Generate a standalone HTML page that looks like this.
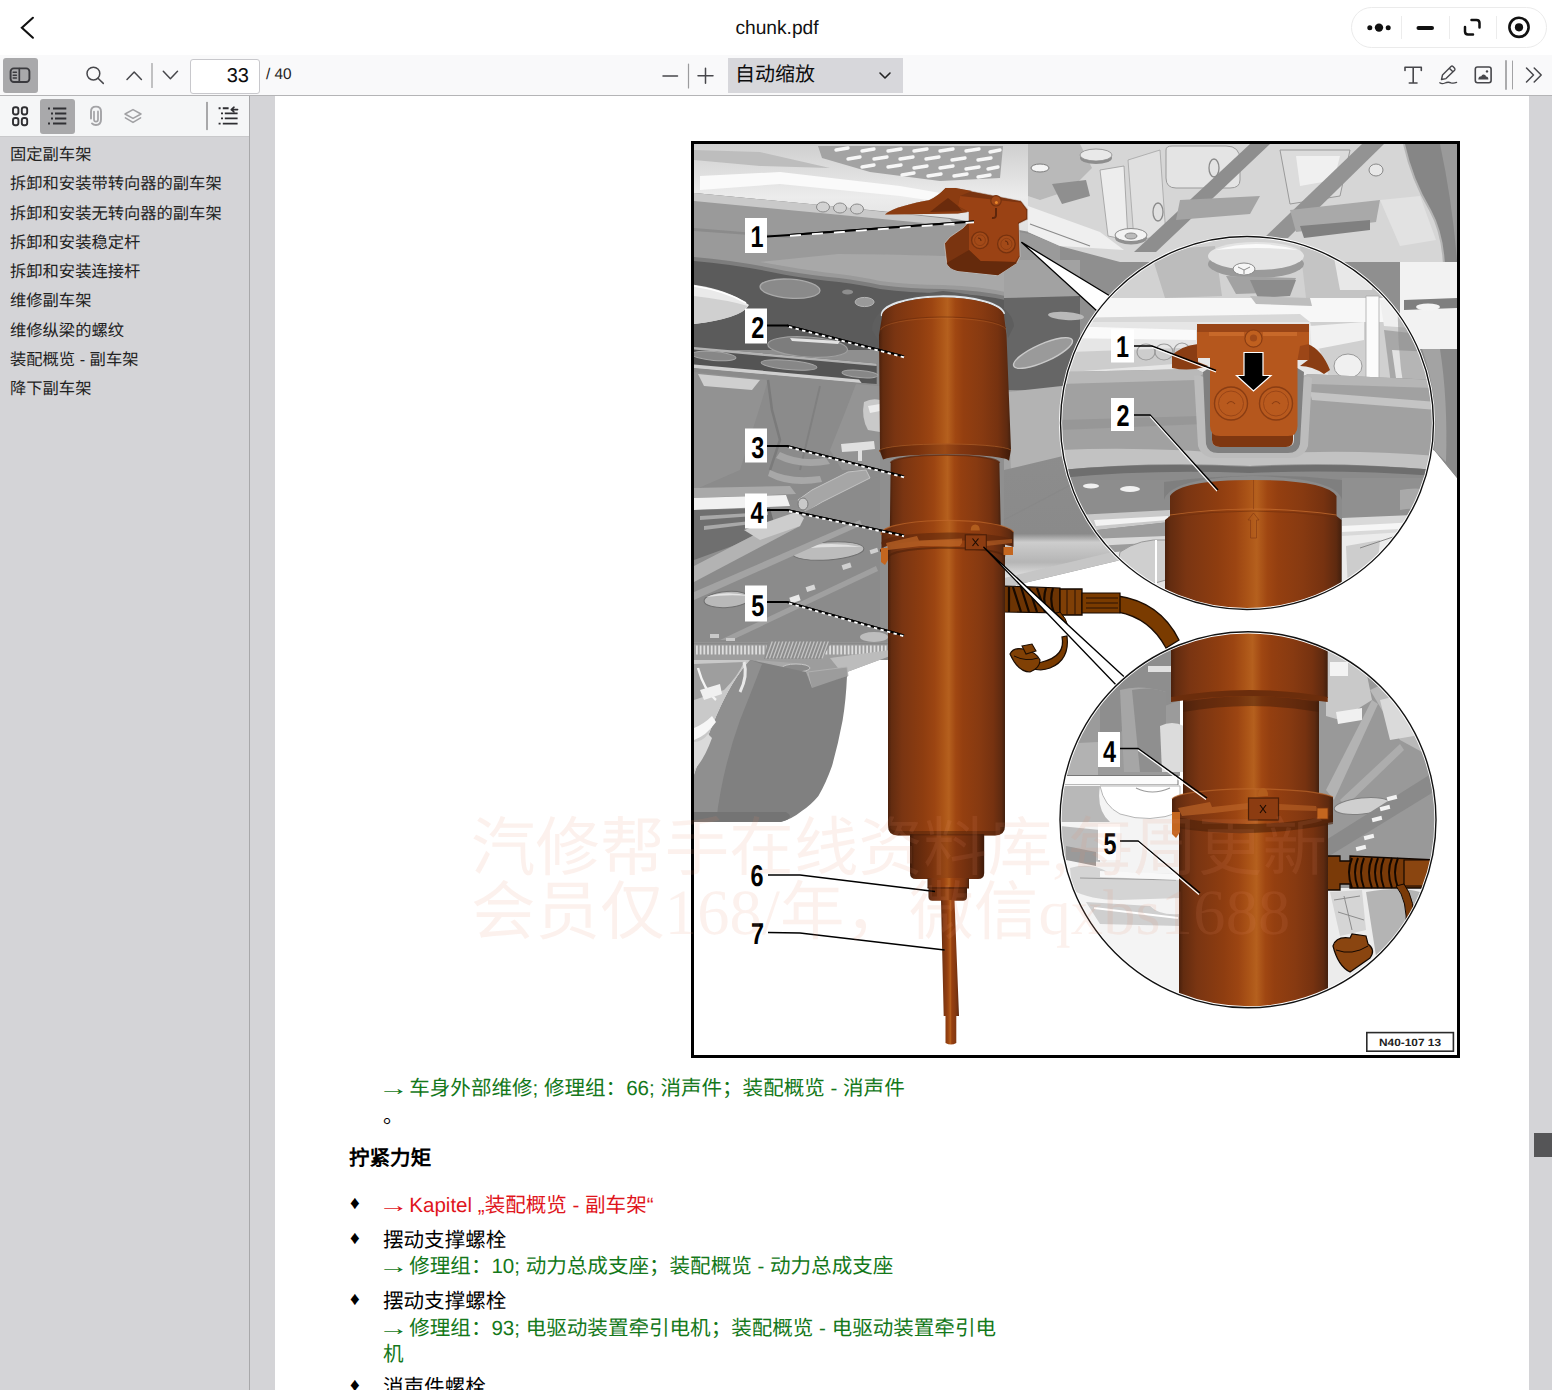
<!DOCTYPE html>
<html lang="zh-CN">
<head>
<meta charset="utf-8">
<title>chunk.pdf</title>
<style>
*{box-sizing:border-box;margin:0;padding:0}
html,body{width:1552px;height:1390px;overflow:hidden;background:#fff}
body{text-rendering:geometricPrecision;position:relative;font-family:"Liberation Sans",sans-serif;color:#0c0c0d}
.abs{position:absolute}
#titlebar{left:0;top:0;width:1552px;height:55px;background:#fff}
#title{left:0;top:0;width:1554px;height:58px;line-height:58px;text-align:center;font-size:19.2px;color:#111}
#capsule{left:1351px;top:7px;width:196px;height:41px;border:1px solid #ebebeb;border-radius:21px;background:#fff}
#toolbar{left:0;top:55px;width:1552px;height:41px;background:#f9f9fa;border-bottom:1px solid #b4b4b6}
#sbtoggle{left:3px;top:58px;width:35px;height:35px;background:#a9a9ab;border-radius:3px}
#pagenum{left:190px;top:59px;width:70px;height:35px;background:#fff;border:1px solid #c8c8cc;border-radius:3px;font-size:20px;line-height:33px;text-align:right;padding-right:10px;color:#0c0c0d}
#numpages{left:266px;top:58px;height:33px;line-height:33px;font-size:15.4px;color:#222}
#scale{left:728px;top:58px;width:175px;height:35px;background:#d7d7db;font-size:20px;line-height:35px;padding-left:7px;color:#0c0c0d}
#sidebar{left:0;top:96px;width:249px;height:1294px;background:#d4d4d7}
#sbborder{left:249px;top:96px;width:1px;height:1294px;background:#a8a8aa}
#sbtools{left:0;top:96px;width:249px;height:41px;background:#f5f6f7;border-bottom:1px solid #c9c9cb}
#outlinebtn{left:40px;top:99px;width:35px;height:35px;background:#a9a9ab;border-radius:3px}
.ol{left:10px;font-size:16.3px;line-height:20px;height:20px;color:#222;white-space:nowrap}
#viewer{left:250px;top:96px;width:1302px;height:1294px;background:#d4d4d7}
#page{left:275px;top:96px;width:1254px;height:1294px;background:#fff;overflow:hidden}
#thumb{left:1534px;top:1133px;width:18px;height:24px;background:#555557}
.t{white-space:nowrap;font-size:20.55px;line-height:26px;height:26px}
.ar{display:inline-block;transform:scaleX(1.5);transform-origin:48% 50%}
.g{color:#14781a}
.r{color:#df151c}
.k{color:#000}
.b{font-size:19px;color:#000;line-height:26px;height:26px}
</style>
</head>
<body>
<!-- title bar -->
<div id="titlebar" class="abs"></div>
<div id="title" class="abs">chunk.pdf</div>
<svg class="abs" style="left:14px;top:12px" width="30" height="32" viewBox="0 0 30 32"><path d="M18.9 5.8L7.9 15.7L18.9 25.7" fill="none" stroke="#111" stroke-width="2.1" stroke-linecap="round" stroke-linejoin="miter"/></svg>
<div id="capsule" class="abs"></div>
<svg class="abs" style="left:1351px;top:7px" width="196" height="41" viewBox="1351 7 196 41">
  <g stroke="#ececec" stroke-width="1"><path d="M1401.5 16V39M1449.5 16V39M1496.5 16V39"/></g>
  <circle cx="1379" cy="27.6" r="4.2" fill="#111"/><circle cx="1369.8" cy="27.8" r="2.5" fill="#111"/><circle cx="1388.2" cy="27.8" r="2.5" fill="#111"/>
  <path d="M1418.5 28H1432" stroke="#111" stroke-width="4" stroke-linecap="round"/>
  <path d="M1471.5 20H1476.5Q1479.5 20 1479.5 23V27.5M1473 34.5H1468Q1465 34.5 1465 31.5V27" fill="none" stroke="#111" stroke-width="2.5" stroke-linecap="round"/>
  <circle cx="1519" cy="27.3" r="9.6" fill="none" stroke="#111" stroke-width="2.6"/><circle cx="1519" cy="27.3" r="4.1" fill="#111"/>
</svg>

<!-- main toolbar -->
<div id="toolbar" class="abs"></div>
<div id="sbtoggle" class="abs"></div>
<div id="pagenum" class="abs">33</div>
<div id="numpages" class="abs">/ 40</div>
<div id="scale" class="abs">自动缩放</div>
<svg id="tbicons" class="abs" style="left:0;top:55px" width="1552" height="41" viewBox="0 55 1552 41" fill="none" stroke="#47474b" stroke-width="1.5" stroke-linecap="round" stroke-linejoin="round">
  <!-- sidebar toggle -->
  <rect x="10.6" y="68.4" width="18.8" height="13.6" rx="3.2" stroke="#3a3a3e" stroke-width="1.9"/>
  <path d="M19.3 68.5V82" stroke="#3a3a3e" stroke-width="1.7"/><path d="M13.2 72.3H16.4M13.2 75.2H16.4M13.2 78.1H16.4" stroke="#3a3a3e" stroke-width="1.5"/>
  <!-- search -->
  <circle cx="93.4" cy="73.6" r="6.4"/><path d="M98 78.3L103.3 83.4"/>
  <!-- up / down -->
  <path d="M127 79.5L134.2 72L141.4 79.5"/>
  <path d="M152 63.5V87.5" stroke="#9b9b9d" stroke-width="1.2"/>
  <path d="M163.3 71.3L170.4 78.8L177.5 71.3"/>
  <!-- zoom out / in -->
  <path d="M663 76H677.5"/>
  <path d="M688.5 64V88" stroke="#9b9b9d" stroke-width="1.2"/>
  <path d="M698 75.8H713M705.5 68.3V83.3"/>
  <!-- select chevron -->
  <path d="M880 73L885 78L890 73" stroke="#222" stroke-width="1.6"/>
  <!-- T -->
  <path d="M1405 70.5V67.2H1421.3V70.5M1413.2 67.2V83M1409.3 83H1417" stroke-width="1.6"/>
  <!-- pencil -->
  <path d="M1441.5 79.5L1442.5 75L1451 66.5Q1452 65.6 1453 66.5L1454.6 68.2Q1455.4 69.2 1454.6 70.2L1446 78.6Z M1449.3 68.2L1452.9 71.8" stroke-width="1.4"/>
  <path d="M1439.8 82.8Q1442 84.4 1445 83Q1448 81.6 1451 82.8Q1453.6 83.6 1456.6 82.4" stroke-width="1.3"/>
  <!-- image -->
  <rect x="1475.3" y="67" width="15.8" height="15.8" rx="2.2" stroke-width="1.6"/>
  <path d="M1478.3 79.6Q1478.3 76.2 1481.3 76.2Q1482.2 73.6 1484.6 74.8Q1486 75.2 1486 76.6Q1488.4 76.8 1488.4 79.6Z" fill="#47474b" stroke="none"/>
  <circle cx="1487" cy="71.4" r="1.2" fill="#47474b" stroke="none"/>
  <!-- separators -->
  <path d="M1506 61V89" stroke="#a2a2a4" stroke-width="1.8"/><path d="M1512.5 61V89" stroke="#a2a2a4" stroke-width="1"/>
  <!-- >> -->
  <path d="M1526.5 68L1533.5 75L1526.5 82M1534.2 68L1541.2 75L1534.2 82"/>
</svg>

<!-- sidebar -->
<div id="sidebar" class="abs"></div>
<div id="sbtools" class="abs"></div>
<div id="outlinebtn" class="abs"></div>
<div id="sbborder" class="abs"></div>
<svg id="sbicons" class="abs" style="left:0;top:96px" width="249" height="41" viewBox="0 96 249 41" fill="none" stroke="#2e2e32" stroke-width="1.9" stroke-linecap="round" stroke-linejoin="round">
  <!-- thumbnails -->
  <rect x="13" y="107.3" width="5.4" height="7.2" rx="2.2"/><rect x="21.8" y="107.3" width="5.4" height="7.2" rx="2.2"/>
  <rect x="13" y="118" width="5.4" height="7.2" rx="2.2"/><rect x="21.8" y="118" width="5.4" height="7.2" rx="2.2"/>
  <!-- outline (active) -->
  <path d="M53 108.6H66.3M55 113.5H66.3M55 118.4H66.3M53 123.4H66.3" stroke="#303034" stroke-width="2" stroke-linecap="butt"/>
  <path d="M48 108.6h2M51 113.5h2M51 118.4h2M48 123.4h2" stroke="#303034" stroke-width="2" stroke-linecap="butt"/>
  <!-- attachment -->
  <path d="M91 118.6V111.6Q91 106.6 96 106.6Q101 106.6 101 111.6V119.6Q101 125 96 125Q93.4 125 92 123.4" stroke="#a3a3a6" stroke-width="1.9"/>
  <path d="M94 111.6V119.4Q94 121.6 96 121.6Q98 121.6 98 119.4V111.4" stroke="#a3a3a6" stroke-width="1.7"/>
  <!-- layers -->
  <path d="M133 109.6L141 114L133 118.4L125 114Z M125.4 117.8L133 122.4L140.6 117.8" stroke="#a0a0a3" stroke-width="1.5"/>
  <!-- separator -->
  <path d="M207 102.5V129.5" stroke="#8e8e90" stroke-width="1.5"/>
  <!-- current outline item -->
  <path d="M222.8 108.2H228.6M224.8 113.4H237.6M224.8 118.4H237.6M222.8 123.6H237.6" stroke-width="1.9" stroke-linecap="butt"/>
  <path d="M218.6 108.2h2M221 113.4h2M221 118.4h2M218.6 123.6h2" stroke-width="1.9" stroke-linecap="butt"/>
  <path d="M231.3 109.6H237.6M231.3 109.6L234 107.2M231.3 109.6L234 112" stroke-width="1.6"/>
</svg>
<div class="abs ol" style="top:145px">固定副车架</div>
<div class="abs ol" style="top:174px">拆卸和安装带转向器的副车架</div>
<div class="abs ol" style="top:204px">拆卸和安装无转向器的副车架</div>
<div class="abs ol" style="top:233px">拆卸和安装稳定杆</div>
<div class="abs ol" style="top:262px">拆卸和安装连接杆</div>
<div class="abs ol" style="top:291px">维修副车架</div>
<div class="abs ol" style="top:321px">维修纵梁的螺纹</div>
<div class="abs ol" style="top:350px">装配概览 - 副车架</div>
<div class="abs ol" style="top:379px">降下副车架</div>

<!-- viewer -->
<div id="viewer" class="abs"></div>
<div id="page" class="abs"></div>
<div id="thumb" class="abs"></div>

<!-- figure -->
<svg id="fig" class="abs" style="left:691px;top:141px" width="769" height="917" viewBox="691 141 769 917">
<defs>
  <clipPath id="inner"><rect x="694" y="144" width="763" height="911"/></clipPath>
  <clipPath id="c1"><circle cx="1247" cy="423" r="186.5"/></clipPath>
  <clipPath id="c2"><circle cx="1248" cy="819.8" r="188"/></clipPath>
  <linearGradient id="cyl" x1="0" x2="1" y1="0" y2="0">
    <stop offset="0" stop-color="#4a200c"/><stop offset="0.03" stop-color="#632c10"/><stop offset="0.12" stop-color="#7a3512"/>
    <stop offset="0.30" stop-color="#8e3d10"/><stop offset="0.40" stop-color="#9c4512"/><stop offset="0.47" stop-color="#ab5417"/>
    <stop offset="0.52" stop-color="#b5601e"/><stop offset="0.58" stop-color="#a04712"/><stop offset="0.64" stop-color="#943f10"/>
    <stop offset="0.78" stop-color="#873a11"/><stop offset="0.90" stop-color="#763210"/><stop offset="0.97" stop-color="#5e2a10"/><stop offset="1" stop-color="#42200e"/>
  </linearGradient>
  <linearGradient id="cyld" x1="0" x2="1" y1="0" y2="0">
    <stop offset="0" stop-color="#3e1a09"/><stop offset="0.06" stop-color="#5c270d"/><stop offset="0.3" stop-color="#7a330e"/>
    <stop offset="0.5" stop-color="#9a4a16"/><stop offset="0.62" stop-color="#823610"/><stop offset="0.9" stop-color="#632a0e"/><stop offset="1" stop-color="#3e1a09"/>
  </linearGradient>
  <linearGradient id="bump" x1="0" x2="1" y1="0" y2="0">
    <stop offset="0" stop-color="#dcdcdc"/><stop offset="0.25" stop-color="#c4c4c4"/><stop offset="0.7" stop-color="#9a9a9a"/><stop offset="1" stop-color="#858585"/>
  </linearGradient>
  <linearGradient id="fadeR" x1="0" x2="0" y1="0" y2="1">
    <stop offset="0" stop-color="#8d8d8d"/><stop offset="0.66" stop-color="#8a8a8a"/><stop offset="0.72" stop-color="#cdcdcd"/><stop offset="0.86" stop-color="#b5b5b5"/><stop offset="1" stop-color="#f1f1f1"/>
  </linearGradient>
  <linearGradient id="topL" x1="0" x2="0" y1="0" y2="1">
    <stop offset="0" stop-color="#cfcfcf"/><stop offset="0.45" stop-color="#ececec"/><stop offset="1" stop-color="#d6d6d6"/>
  </linearGradient>
</defs>
<rect x="692.5" y="142.5" width="766" height="914" fill="#fff" stroke="#000" stroke-width="3"/>
<g clip-path="url(#inner)">
  <!-- ===== main scene background ===== -->
  <!-- overall mid gray underbody -->
  <path d="M694 144H1457V478L1434 450L1200 540L1125 559L1004 588V640L890 660H694Z" fill="#8f8f8f"/>
  <!-- top light band (engine bay / grille) -->
  <path d="M694 144H1457V260L1300 262L1120 250L1030 232L950 218L820 205L694 193Z" fill="url(#topL)"/>
  <!-- white streaks in top band -->
  <path d="M700 176L780 172L900 186L1010 205L1010 212L900 196L780 184L700 190Z" fill="#fafafa"/>
  <path d="M694 150L760 152L830 168L760 166L694 160Z" fill="#bdbdbd"/>
  <!-- mesh grille -->
  <path d="M818 146H1003L1000 178L940 181L870 172L822 158Z" fill="#a3a3a3"/>
  <g stroke="#f6f6f6" stroke-width="3.4" stroke-linecap="round">
    <path d="M836 150l12-2M862 151l12-2M888 151l13-2M914 151l13-2M940 151l13-2M966 151l13-2M990 152l10-2"/>
    <path d="M848 159l12-2M874 159l13-2M900 159l13-2M926 159l13-2M952 160l13-2M978 160l13-2"/>
    <path d="M862 167l12-2M888 167l13-2M914 168l13-2M940 168l13-2M966 169l13-2M988 169l10-2"/>
    <path d="M902 175l12-2M928 176l13-2M954 176l13-2M978 177l12-2"/>
  </g>
  <!-- beam (subframe cross member) -->
  <path d="M694 193L820 205L950 219L1030 234L1060 246V330L1010 322L1010 300L880 300L800 282L694 262Z" fill="#9a9a9a"/>
  <path d="M760 262Q815 272 838.8 274Q862 277 880 281Q910 285 943 285Q980 286 1010 293L1060 291V268Q1000 258 943 256Q880 254 838 254Z" fill="#a8a8a8"/>
  <path d="M694 193L820 205L950 219L955 226L820 213L694 201Z" fill="#c9c9c9"/>
  <path d="M694 228L790 236L790 238L694 231Z" fill="#8b8b8b"/>
  <!-- three small circles -->
  <g fill="#d2d2d2" stroke="#8a8a8a" stroke-width="1"><ellipse cx="823" cy="207" rx="6.5" ry="5"/><ellipse cx="840" cy="208" rx="6.5" ry="5"/><ellipse cx="857" cy="209" rx="6.5" ry="5"/></g>
  <!-- dark band below beam -->
  <path d="M694 260Q740 264 784.7 273.8Q815 279 838.8 281Q862 284 880 288Q910 292 943 292Q980 293 1010 300L1080 297V392H1004V350L694 350Z" fill="#5b5b5b"/>
  <path d="M694 257Q740 261 784.7 270.8Q815 276 838.8 278Q862 281 880 285Q910 289 943 289Q980 290 1010 297L1080 294V298L1010 301Q980 294 943 293Q910 293 880 289Q862 285 838.8 282Q815 280 784.7 274.8Q740 265 694 261Z" fill="#7d7d7d"/>
  <!-- recess ellipses in dark band -->
  <ellipse cx="790" cy="288.7" rx="30" ry="9.5" fill="#8a8a8a" stroke="#a9a9a9" stroke-width="1.3" transform="rotate(4 790 288.7)"/>
  <ellipse cx="847.6" cy="292" rx="5.5" ry="2.6" fill="#8e8e8e"/>
  <ellipse cx="864.6" cy="302" rx="9.5" ry="4.6" fill="#9a9a9a" stroke="#b5b5b5" stroke-width="1"/>
  <!-- white blob on left -->
  <path d="M694 284.7Q730 290 749 305Q742 318 694 324Z" fill="#eaeaea"/>
  <path d="M694 296Q728 300 748 306Q742 318 694 324Z" fill="#d0d0d0"/>
  <path d="M694 286Q726 291 746 303" fill="none" stroke="#fff" stroke-width="1.6"/>
  <!-- second recess + rail -->
  <ellipse cx="807.7" cy="347" rx="40" ry="10" fill="#7d7d7d" stroke="#9f9f9f" stroke-width="1.2" transform="rotate(4 807.7 347)"/>
  <path d="M790 338L840 341L838 344L792 341Z" fill="#e2e2e2"/>
  <path d="M694 347L876.7 363.5V384L694 372Z" fill="#545454"/>
  <path d="M694 347L876.7 363.5V366L694 349.6Z" fill="#b2b2b2"/>
  <ellipse cx="714" cy="356" rx="22" ry="4.4" fill="#878787" stroke="#a5a5a5" stroke-width="1" transform="rotate(5 714 356)"/>
  <ellipse cx="789" cy="365" rx="28" ry="4.6" fill="#878787" stroke="#a5a5a5" stroke-width="1" transform="rotate(5 789 365)"/>
  <ellipse cx="860" cy="374" rx="18" ry="3.6" fill="#878787" stroke="#a5a5a5" stroke-width="1" transform="rotate(5 860 374)"/>
  <path d="M694 364.5L859 379.5L862 383.5L694 368.5Z" fill="#cfcfcf"/>
  <!-- liner region -->
  <path d="M694 368L862 383L880 386V500L694 500Z" fill="#8b8b8b"/>
  <path d="M694 372L768 380L762 400L740 470L694 490Z" fill="#929292"/>
  <path d="M698 374L760 380L752 390L704 386Z" fill="#cfcfcf"/>
  <path d="M768 380L772 410L780 440L770 470" fill="none" stroke="#7b7b7b" stroke-width="2.5"/>
  <path d="M820 386L812 420L800 470" fill="none" stroke="#808080" stroke-width="2"/>
  <path d="M856 384L846 410L830 450L842 470L880 470V386Z" fill="#949494"/>
  <path d="M864 402Q872 398 880 400V432L868 430Q861 418 864 402Z" fill="#c9c9c9"/>
  <path d="M868 406L880 404V411L870 413Z" fill="#ececec"/>
  <path d="M780 452Q800 462 826 458L830 464Q800 470 776 458Z" fill="#a5a5a5"/>
  <path d="M770 470Q790 480 820 476L822 482Q790 488 768 476Z" fill="#a8a8a8"/>
  <!-- bracket w/ bolt near 3 -->
  <path d="M841 444L874 441L875 449L862 450.5V461H858V451L842 452Z" fill="#e0e0e0"/>
  <!-- pipe streaks on left -->
  <path d="M694 488L790 486L796 494L694 498Z" fill="#a9a9a9"/>
  <path d="M694 498L786 495L790 506L694 510Z" fill="#f1f1f1"/>
  <path d="M694 510L770 508L776 530L694 560Z" fill="#6f6f6f"/>
  <path d="M700 516L768 512V515L700 520ZM704 526L760 520V523L704 530Z" fill="#a9a9a9"/>
  <!-- arm going to cylinder -->
  <path d="M798 500L812 490L848 472L866 470L870 478L822 502L806 512Z" fill="#a6a6a6" stroke="#c3c3c3" stroke-width="1"/>
  <ellipse cx="803" cy="504" rx="5" ry="6" fill="#c9c9c9" stroke="#7a7a7a" stroke-width="1"/>
  <!-- big underbody plate -->
  <path d="M694 566L760 532L800 514L822 503L880 476V642H694Z" fill="#8b8b8b"/>
  <path d="M694 566L760 532L790 520L800 526L766 544L694 582Z" fill="#b3b3b3"/>
  <path d="M744 530L796 512L804 518L800 526L760 540Z" fill="#cdcdcd"/>
  <ellipse cx="828" cy="551" rx="36" ry="9" fill="#bcbcbc" stroke="#6f6f6f" stroke-width="1" transform="rotate(-4 828 551)"/>
  <path d="M796 549Q826 540 862 547Q830 546 796 549Z" fill="#e0e0e0"/>
  <ellipse cx="727" cy="599.5" rx="23" ry="8" fill="#b9b9b9" stroke="#6f6f6f" stroke-width="1" transform="rotate(-4 727 599.5)"/>
  <path d="M706 597Q726 590 750 596Q728 594 706 597Z" fill="#e4e4e4"/>
  <ellipse cx="874" cy="637" rx="14" ry="5" fill="#bdbdbd"/>
  <path d="M694 592L860 520L862 525L694 600Z" fill="#a3a3a3"/>
  <path d="M720 640L876 566L878 571L732 640Z" fill="#a0a0a0"/>
  <rect x="790" y="596" width="10" height="6" fill="#e9e9e9" transform="rotate(-18 795 599)"/>
  <rect x="806" y="586" width="9" height="5" fill="#d8d8d8" transform="rotate(-18 810 588)"/>
  <rect x="842" y="564" width="9" height="5" fill="#d0d0d0" transform="rotate(-18 846 566)"/>
  <rect x="870" y="549" width="8" height="4" fill="#d0d0d0" transform="rotate(-18 874 551)"/>
  <rect x="710" y="634" width="9" height="4" fill="#c9c9c9"/><rect x="726" y="638" width="9" height="3" fill="#c9c9c9"/>
  <!-- serrated strip -->
  <path d="M694 642H890V656L847 672L808 690L800 668L760 664L694 660Z" fill="#9d9d9d"/>
  <path d="M696 650H888" stroke="#dedede" stroke-width="9" stroke-dasharray="1.8 1.9"/>
  <path d="M694 643.5H890" stroke="#8a8a8a" stroke-width="2"/>
  <path d="M768 641L832 641L822 659L764 659Z" fill="#8d8d8d"/>
  <path d="M768 650H826" stroke="#c4c4c4" stroke-width="17" stroke-dasharray="1.4 2.1" transform="skewX(-20) translate(237 0)"/>
  <path d="M830 658L890 650V656L847 672L838 668Z" fill="#bcbcbc"/>
  <!-- under strip shapes -->
  <path d="M756 660L806 664L808 676L770 674Z" fill="#a9a9a9"/>
  <ellipse cx="796" cy="668" rx="14" ry="4" fill="#8a8a8a" stroke="#c4c4c4" stroke-width="1"/>
  <path d="M807.8 672L847 667L848 676L812 690Z" fill="#9c9c9c" stroke="#b5b5b5" stroke-width=".8"/>
  <!-- bumper / wheel arch -->
  <path d="M750 660L806 672L812 688L847 676Q846 700 842.6 720.6Q838 745 832 766Q826 783 818.4 796Q811 805 801.8 811Q792 819 780.6 822H694V775Q706 740 717 714.6Q732 680 750 660Z" fill="#808080"/>
  <path d="M750 660Q732 680 717 714.6Q706 740 694 775V822H716Q722 770 740 720Q752 690 762 664Z" fill="#8f8f8f"/>
  <path d="M694 812H786Q796 818 780.6 822H694Z" fill="#747474"/>
  <!-- wheel-arch interior (light) -->
  <path d="M694 660H750Q732 680 717 714.6Q706 740 694 775Z" fill="#c9c9c9"/>
  <path d="M694 664L744 662Q738 676 724 690L694 700Z" fill="#9e9e9e"/>
  <path d="M698 668Q704 690 716 700" fill="none" stroke="#f4f4f4" stroke-width="2.4"/>
  <path d="M700 690L720 684L722 694L704 700Z" fill="#f0f0f0"/>
  <path d="M694 728Q704 724 712 716L716 722Q706 736 694 740Z" fill="#f7f7f7"/>
  <path d="M694 742Q702 742 708 734L712 738Q704 760 694 770Z" fill="#dadada"/>
  <path d="M744 662Q748 676 740 692" fill="none" stroke="#e8e8e8" stroke-width="3"/>
  <!-- right of cylinder -->
  <path d="M1004 260H1080V560L1040 575L1004 590Z" fill="#a2a2a2"/>
  <path d="M1004 298L1080 296V392L1004 390Z" fill="#666"/>
  <ellipse cx="1043" cy="353" rx="32" ry="9" fill="#9a9a9a" stroke="#c9c9c9" stroke-width="1.4" transform="rotate(-24 1043 353)"/>
  <ellipse cx="1066" cy="316" rx="18" ry="4" fill="#b9b9b9" transform="rotate(4 1066 316)"/>
  
  <path d="M1008 392L1080 384V470L1012 500Z" fill="#b3b3b3"/>
  <path d="M1004 470L1130 440V552L1004 582Z" fill="url(#fadeR)"/>
  <path d="M1004 520L1080 480" stroke="#888" stroke-width="1.2" fill="none"/>
  <path d="M1004 578L1125 549V559L1004 588Z" fill="#c6c6c6"/>
  <circle cx="1087" cy="581" r="1.3" fill="#fff"/><circle cx="1114" cy="571" r="1.3" fill="#fff"/>
  <!-- top right engine area -->
  <path d="M1028 144H1457V262H1120L1060 246L1028 232Z" fill="#d6d6d6"/>
  <path d="M1028 144H1080L1092 168L1070 190L1040 200L1028 196Z" fill="#b9b9b9"/>
  <ellipse cx="1040" cy="168" rx="9" ry="4" fill="#f4f4f4" stroke="#7c7c7c" stroke-width="1"/>
  <ellipse cx="1096" cy="158" rx="16" ry="6" fill="#8e8e8e"/><ellipse cx="1096" cy="155" rx="16" ry="6" fill="#e9e9e9" stroke="#8a8a8a" stroke-width=".8"/>
  <path d="M1052 184L1086 180L1090 196L1062 204Z" fill="#8f8f8f"/>
  <path d="M1100 170L1124 166L1128 240L1108 236Z" fill="#ededed" stroke="#9a9a9a" stroke-width=".8"/>
  <path d="M1028 206L1100 232L1124 250L1060 246L1028 232Z" fill="#efefef"/>
  <path d="M1030 224L1090 246" stroke="#8a8a8a" stroke-width="1.2"/>
  <!-- gearbox blocks -->
  <path d="M1166 150Q1166 146 1172 146H1226Q1240 146 1240 160V180Q1240 188 1230 188H1176Q1166 188 1166 178Z" fill="#e4e4e4" stroke="#9a9a9a" stroke-width="1"/>
  <path d="M1128 160L1160 150L1166 236L1134 240Z" fill="#e0e0e0" stroke="#a5a5a5" stroke-width=".8"/>
  <path d="M1280 150H1350L1340 196L1290 204Z" fill="#dcdcdc" stroke="#9a9a9a" stroke-width="1"/>
  <path d="M1296 156H1340L1334 180L1300 186Z" fill="#f0f0f0"/>
  <!-- dark diagonal bands -->
  <path d="M1250 144H1270L1156 252H1134Z" fill="#8e8e8e"/>
  <path d="M1362 144H1384L1288 238H1264Z" fill="#939393"/>
  <path d="M1180 200L1260 196L1250 214L1176 220Z" fill="#a4a4a4"/>
  <path d="M1290 210L1380 200L1376 222L1296 232Z" fill="#a9a9a9"/>
  <path d="M1300 226L1370 220V230L1304 238Z" fill="#808080"/>
  <ellipse cx="1214" cy="168" rx="5" ry="9" fill="none" stroke="#8a8a8a" stroke-width="1.3"/>
  <ellipse cx="1158" cy="212" rx="5" ry="9" fill="none" stroke="#8a8a8a" stroke-width="1.3"/>
  <ellipse cx="1376" cy="170" rx="7" ry="6" fill="#e8e8e8" stroke="#888" stroke-width="1"/>
  <!-- bolt -->
  <ellipse cx="1131" cy="238" rx="16" ry="6.5" fill="#909090"/>
  <ellipse cx="1131" cy="235" rx="16" ry="6.5" fill="#f3f3f3" stroke="#8a8a8a" stroke-width="1"/>
  <ellipse cx="1131" cy="236" rx="6" ry="3" fill="#bbb" stroke="#777" stroke-width=".8"/>
  <!-- wheel arch right -->
  <path d="M1404 144H1457V340L1440 320Q1452 250 1430 210Q1412 180 1404 144Z" fill="#868686"/>
  <path d="M1418 144H1440Q1452 200 1457 260V144Z" fill="#9a9a9a"/>
  <path d="M1404 144Q1412 180 1430 210Q1452 250 1440 320" fill="none" stroke="#b5b5b5" stroke-width="2"/>
  <path d="M1380 200L1420 196L1436 240L1400 246Z" fill="#e2e2e2"/>
  <!-- right strip next to circle -->
  <path d="M1400 262H1457V349H1400Z" fill="#f2f2f2"/>
  <path d="M1404 300L1457 298V308L1404 310Z" fill="#7f7f7f"/>
  <ellipse cx="1428" cy="307" rx="12" ry="3.4" fill="#f4f4f4"/>
  <path d="M1420 349H1457V478L1434 450Q1440 400 1420 349Z" fill="#8a8a8a"/>
  <path d="M1422 349H1440Q1448 400 1446 462L1434 450Q1440 400 1422 349Z" fill="#a3a3a3"/>
  <!-- ===== hose + hook right of cylinder (behind cylinder) ===== -->
  <g>
    <path d="M1118 596Q1160 602 1179 640L1166 648Q1150 618 1118 612Z" fill="#7a3b00" stroke="#1c0d03" stroke-width="1.3"/>
    <path d="M1004 586L1060 588V613L1004 612Z" fill="#6d3403" stroke="#140800" stroke-width="1.2"/>
    <path d="M1009 587V612M1013 587L1021 612M1021 587L1029 612M1029 588L1037 612M1037 588L1045 612M1046 588Q1042 600 1047 613M1053 588Q1049 600 1054 613" fill="none" stroke="#160900" stroke-width="2.2"/>
    <path d="M1060 589H1082V615H1060Z" fill="#7f3f06" stroke="#140800" stroke-width="1.3"/>
    <path d="M1067 589V615M1075 589V615" stroke="#2a1204" stroke-width="1"/>
    <path d="M1082 593H1120V613H1082Z" fill="#7a3b00" stroke="#140800" stroke-width="1.2"/>
    <path d="M1086 598H1118M1086 603H1118M1086 608H1118" stroke="#2a1204" stroke-width="1"/>
    <path d="M1060 612Q1066 618 1068 626L1064 628Q1060 620 1054 614Z" fill="#7a3b00" stroke="#140800" stroke-width="1"/>
    <!-- hook -->
    <path d="M1062 637Q1066 656 1042 662Q1036 664 1030 662L1028 667Q1040 672 1050 668Q1070 660 1067 636Z" fill="#7a3b00" stroke="#1c0d03" stroke-width="1.2"/>
    <path d="M1010 654Q1014 646 1026 650Q1036 652 1040 660Q1040 668 1030 672Q1018 672 1010 654Z" fill="#804005" stroke="#1c0d03" stroke-width="1.2"/>
    <path d="M1022 646L1032 644L1036 651L1026 654Z" fill="#804005" stroke="#1c0d03" stroke-width="1.1"/>
    <path d="M1014 656Q1026 662 1038 658" fill="none" stroke="#1c0d03" stroke-width="1"/>
  </g>
  <!-- ===== bracket (1) ===== -->
  <path d="M884.8 214.5Q892 209 903 206.3Q918 202 929 200.3Q938 196 945.6 187.9H955.4L990.5 194.8L1021 200.8L1027.7 209.6V219.4L1019 223.8L1020 256.7L1016.8 263L998 275.3L957.6 271Q948 268 946.7 263L944.5 243.5L950 237L963 228L968.6 222V211.8L957.6 213.4L924.8 214Z" fill="#7a3410" stroke="#d5d5d5" stroke-width="1" stroke-opacity=".6"/>
  <path d="M884.8 214.5Q892 209 903 206.3Q918 202 929 200.3Q938 196 945.6 187.9H955.4L972 191L960 196L958 206L968 212L957.6 213.4L924.8 214Z" fill="#8b3c11"/>
  <path d="M940 204L948 198L958 206L962 211L930 212Z" fill="#6a2b0c"/>
  <path d="M960 196L1021 202.5L1026 210V218.5L1018 222.5L1019 256L1015 262L980.6 261L969 250V212L958 206Z" fill="#9a4214"/>
  <path d="M957.6 271L998 275.3L1016.8 263L1015 262L980.6 261L969 250L946.7 263Q948 268 957.6 271Z" fill="#652a0c"/>
  <circle cx="980" cy="240.2" r="8.4" fill="#a34a18" stroke="#76320f" stroke-width="1.3"/><circle cx="980" cy="240.2" r="5.4" fill="none" stroke="#863a11" stroke-width=".8"/>
  <circle cx="1006.4" cy="244" r="8.8" fill="#a34a18" stroke="#76320f" stroke-width="1.3"/><circle cx="1006.4" cy="244" r="5.6" fill="none" stroke="#863a11" stroke-width=".8"/>
  <path d="M978 238q3 0 3 3M1005 241q3 0 3 4" fill="none" stroke="#652a0c" stroke-width="1.1"/>
  <circle cx="996" cy="200.8" r="5.2" fill="#a04817" stroke="#76320f" stroke-width="1.2"/><circle cx="996.4" cy="202.6" r="1.5" fill="#e8862a"/>
  <path d="M996 208V215Q996 218.5 992 218" fill="none" stroke="#5e260b" stroke-width="2"/>

  <!-- ===== main cylinder ===== -->
  <!-- dark seat + rim highlight at top -->
  <path d="M872 330Q872 300 943 291Q1012 298 1014 326L1008 338L1004 314Q1000 298 943.5 296Q886 298 882 316L878 340Z" fill="#5e5e5e"/>
  <path d="M882 316A61 18.5 0 0 1 1004 314" fill="none" stroke="#dfe5ea" stroke-width="2.2"/>
  <!-- section 2 -->
  <path d="M882 317A61 18.5 0 0 1 1004 315L1006.5 335L1011 450A66 7 0 0 0 880 452L879 335Z" fill="url(#cyl)"/>
  <path d="M880.5 329A63 12.5 0 0 1 1006 328" fill="none" stroke="#6b2c0c" stroke-width="1" opacity=".6"/>
  <path d="M880.5 330.2A63 12.5 0 0 1 1006 329.2" fill="none" stroke="#c2692a" stroke-width="1" opacity=".35"/>
  <!-- bevel below section 2 -->
  <path d="M880 451.5A66 7 0 0 1 1011 449.5L1009 461A64 7 0 0 0 883 459.5Z" fill="url(#cyld)"/>
  <path d="M880 452A66 7 0 0 1 1011 450" fill="none" stroke="#c06a2c" stroke-width="1" opacity=".55"/>
  <!-- section 3 -->
  <path d="M890.7 463A54.3 8 0 0 1 999.4 463L1001 540H889.7Z" fill="url(#cyl)"/>
  <path d="M890.7 463A54.3 8 0 0 1 999.4 463" fill="none" stroke="#5a250b" stroke-width="1.6" opacity=".7"/>
  <!-- section 5 -->
  <path d="M888 540H1005V825Q1005 835.5 995 835.5H898Q888 835.5 888 825Z" fill="url(#cyl)"/>
  <path d="M888.5 559A58.5 10 0 0 1 1005 556.5" fill="none" stroke="#4a1f09" stroke-width="2" opacity=".55"/>
  <!-- clamp (4) -->
  <path d="M881.5 535A66 13 0 0 1 1013.5 532V547A66 10 0 0 0 884 554L881.5 551Z" fill="url(#cyl)"/>
  <path d="M881.5 535A66 13 0 0 1 1013.5 532" fill="none" stroke="#bf672a" stroke-width="1.2" opacity=".7"/>
  <path d="M884 546A64 10 0 0 1 1013 540V547A66 10 0 0 0 884 554Z" fill="#5a250b" opacity=".55"/>
  <path d="M886 543L917 536L919 540.5L962 538.5V543L960 546L921 546L888 550Z" fill="#b96326" opacity=".75"/>
  <path d="M986 541L1012 539V543L986 546Z" fill="#b96326" opacity=".6"/>
  <path d="M881 548H888V560L885 565L881 562Z" fill="#c4661f"/>
  <path d="M1003.5 547H1013V555H1003.5Z" fill="#c4661f"/>
  <rect x="965.3" y="534.8" width="21" height="15" fill="#8c3c11" stroke="#4c1f08" stroke-width="1.1"/>
  <path d="M972.5 538.5l6 7.5M978.5 538.5l-6 7.5" stroke="#1d0c03" stroke-width="1.2"/>
  <path d="M970.7 530.5Q970.7 524.5 975.2 524.5Q979.8 524.5 979.8 530.5Z" fill="#b5601f" opacity=".9"/>
  <!-- bottom steps -->
  <path d="M910 834H984.2V873Q984.2 879 978 879H916Q910 879 910 873Z" fill="url(#cyld)"/>
  <path d="M888 826Q888 835.5 898 835.5H995Q1005 835.5 1005 826V822Q1005 831 995 831H898Q888 831 888 822Z" fill="#4a1f09" opacity=".45"/>
  <path d="M927.5 878H969V888H927.5Z" fill="url(#cyl)"/>
  <path d="M928.5 887H967V897Q967 900.7 963 900.7H932.5Q928.5 900.7 928.5 897Z" fill="url(#cyld)"/>
  <path d="M927.5 888H969" stroke="#4a1f09" stroke-width="1"/>
  <!-- rod -->
  <path d="M941 900H954.5L959 1016H956.3L956.3 1043Q951 1046 945.5 1043V1016H943.7Z" fill="url(#cyl)"/>

  <!-- ===== callout wedges ===== -->
  <path d="M1021.7 242.4L1110 296L1097 311Z" fill="#fff" stroke="#000" stroke-width="1.3" stroke-linejoin="round"/>
  <path d="M983.8 547.3L1126 678.5L1119 688Z" fill="#fff" stroke="#000" stroke-width="1.3" stroke-linejoin="round"/>
  <!-- ===== circle 1 inset ===== -->
  <g clip-path="url(#c1)">
    <rect x="1060" y="236" width="376" height="376" fill="#dadada"/>
    <!-- top engine region -->
    <path d="M1060 236H1436V300H1060Z" fill="#d2d2d2"/>
    <path d="M1150 250L1215 246L1222 296L1165 298Z" fill="#bcbcbc"/>
    <path d="M1300 246L1400 262L1396 300L1306 298Z" fill="#c4c4c4"/>
    <path d="M1330 236L1380 236L1372 290L1340 290Z" fill="#e8e8e8"/>
    <!-- mount disc -->
    <ellipse cx="1256" cy="264" rx="48" ry="14" fill="#9a9a9a"/>
    <ellipse cx="1256" cy="256" rx="48" ry="14" fill="#e4e4e4"/>
    <path d="M1215 250Q1256 238 1298 250Q1256 246 1215 250Z" fill="#fafafa"/>
    <path d="M1226 276L1296 278L1290 292L1236 294Z" fill="#a2a2a2"/>
    <path d="M1250 280L1296 280L1290 296L1258 298Z" fill="#8c8c8c"/>
    <ellipse cx="1244" cy="269" rx="11" ry="6" fill="#f6f6f6" stroke="#8a8a8a" stroke-width="1"/>
    <path d="M1238 267l6 3l6-3M1244 270v4" fill="none" stroke="#8a8a8a" stroke-width="1"/>
    <!-- white band -->
    <path d="M1060 298H1436V322H1060Z" fill="#f7f7f7"/>
    <path d="M1060 318L1300 314L1310 322H1060Z" fill="#d8d8d8"/>
    <path d="M1250 296L1310 298L1312 306L1256 304Z" fill="#bdbdbd"/>
    <!-- mid area behind bracket -->
    <path d="M1060 322H1436V380H1060Z" fill="#e6e6e6"/>
    <path d="M1060 326L1196 330L1196 340L1060 338Z" fill="#fafafa"/>
    <path d="M1070 352L1180 348L1200 362L1070 372Z" fill="#cdcdcd"/>
    <g fill="none" stroke="#9c9c9c" stroke-width="1.2"><ellipse cx="1146" cy="352" rx="9" ry="8"/><ellipse cx="1164" cy="352" rx="9" ry="8"/><ellipse cx="1182" cy="351" rx="8" ry="8"/></g>
    <!-- right side parts -->
    <path d="M1310 322L1436 322V400L1330 380Z" fill="#d0d0d0"/>
    <path d="M1366 296H1379V396H1366Z" fill="#fbfbfb" stroke="#aaa" stroke-width=".8"/>
    <path d="M1310 326L1364 322L1364 340L1312 350Z" fill="#f1f1f1"/>
    <ellipse cx="1348" cy="366" rx="14" ry="12" fill="#f0f0f0" stroke="#999" stroke-width="1"/>
    <path d="M1380 300L1436 296V330L1384 326Z" fill="#efefef"/>
    <path d="M1384 330L1436 336V400L1392 392Z" fill="#a8a8a8"/>
    <path d="M1392 350L1436 352V380L1396 378Z" fill="#e2e2e2"/>
    <path d="M1398 300L1436 290V330Q1420 350 1436 420H1410Q1396 360 1398 300Z" fill="#8f8f8f" opacity=".55"/>
    <!-- subframe band -->
    <path d="M1060 372L1196 369L1206 374V447H1298V378L1308 374L1436 380V470Q1340 462 1250 466Q1150 462 1060 472Z" fill="#a1a1a1"/>
    <path d="M1060 372L1196 369L1204 373L1196 380L1060 384Z" fill="#b9b9b9"/>
    <path d="M1300 378L1308 374L1436 380V388L1312 384Z" fill="#b6b6b6"/>
    <path d="M1060 420L1200 416L1204 424L1060 430Z" fill="#979797"/>
    <path d="M1310 392L1436 402V410L1312 400Z" fill="#c4c4c4"/>
    <path d="M1060 450Q1150 446 1250 455Q1340 448 1436 456V470Q1340 462 1250 466Q1150 462 1060 472Z" fill="#c2c2c2"/>
    <!-- notch around bracket bottom -->
    <path d="M1194 376Q1198 374 1206 378L1208 440Q1210 448 1220 448H1286Q1296 448 1298 440L1300 380Q1306 374 1312 378L1308 446Q1304 458 1290 458H1216Q1202 458 1198 446Z" fill="#bcbcbc"/>
    <path d="M1203 372L1212 366V440Q1212 447 1220 447H1286Q1294 447 1294 440V366L1304 372L1300 444Q1298 453 1288 453H1218Q1208 453 1206 444Z" fill="#808080"/>
    <!-- below subframe -->
    <path d="M1060 470Q1150 461 1250 466Q1340 461 1436 470V612H1060Z" fill="#8b8b8b"/>
    <path d="M1060 470Q1150 462 1250 467Q1340 462 1436 470V476Q1340 469 1250 473Q1150 469 1060 478Z" fill="#6e6e6e"/>
    <path d="M1060 480H1170V516L1060 522Z" fill="#8d8d8d"/>
    <ellipse cx="1091" cy="486" rx="8" ry="2.6" fill="#f0f0f0"/><ellipse cx="1130" cy="489" rx="10" ry="3" fill="#f0f0f0"/>
    <path d="M1060 516L1170 510V522L1060 534Z" fill="#c9c9c9"/>
    <path d="M1094 520L1168 516V520L1096 526Z" fill="#f3f3f3"/>
    <path d="M1060 534L1170 522V560L1060 566Z" fill="#9c9c9c"/>
    <path d="M1060 540L1166 536V542L1060 548Z" fill="#d9d9d9"/>
    <path d="M1060 556L1170 548V612H1060Z" fill="#e3e3e3"/>
    <path d="M1120 552Q1140 538 1166 540V580L1130 590Q1114 570 1120 552Z" fill="#cfcfcf" stroke="#999" stroke-width="1"/>
    <path d="M1156 540V584" stroke="#fff" stroke-width="2"/>
    <path d="M1076 566L1128 590L1124 598L1072 574Z" fill="#b8b8b8"/>
    <path d="M1342 478H1436V520L1342 524Z" fill="#909090"/>
    <path d="M1400 490Q1420 486 1436 492V512Q1416 506 1400 510Z" fill="#a9a9a9"/>
    <path d="M1342 518L1436 514V534L1342 538Z" fill="#d9d9d9"/>
    <path d="M1342 526L1420 522V528L1342 532Z" fill="#f6f6f6"/>
    <path d="M1342 536L1436 530V612H1342Z" fill="#ececec"/>
    <path d="M1346 546L1380 540L1376 580L1348 590Z" fill="#cdcdcd"/>
    <path d="M1360 548L1396 536" stroke="#888" stroke-width="1"/>
    <!-- bracket in inset -->
    <path d="M1172 356Q1180 346 1198 344V362L1208 366Q1190 372 1172 368Z" fill="#8a3d13"/>
    <path d="M1308 344Q1322 350 1330 370L1324 374Q1312 366 1300 366L1308 360Z" fill="#8a3d13"/>
    <path d="M1212 430H1293V440Q1293 447 1286 447H1220Q1212 447 1212 440Z" fill="#7f3710"/>
    <path d="M1197 324H1309V360H1297.5V426Q1297.5 436 1288 436H1220Q1210 436 1210 426V358H1197Z" fill="#b5571d"/>
    <path d="M1197 324H1309V332H1197Z" fill="#994517"/>
    <path d="M1209 332H1244V336H1209ZM1263 332H1297V336H1263Z" fill="#c8692a"/>
    <path d="M1297.5 360H1309V344L1300 346Z" fill="#9c4617"/>
    <circle cx="1253.5" cy="338.5" r="8.6" fill="#c0601f" stroke="#8a3d13" stroke-width="1.2"/><circle cx="1253.5" cy="338" r="3.6" fill="#a04a19"/>
    <circle cx="1231" cy="403.5" r="16.5" fill="#b95a1e" stroke="#8a3d13" stroke-width="1.4"/><circle cx="1231" cy="403.5" r="12.5" fill="none" stroke="#994517" stroke-width="1"/>
    <circle cx="1276" cy="403.5" r="16.5" fill="#b95a1e" stroke="#8a3d13" stroke-width="1.4"/><circle cx="1276" cy="403.5" r="12.5" fill="none" stroke="#994517" stroke-width="1"/>
    <path d="M1227 404q4-5 8 0M1272 404q4-5 8 0" fill="none" stroke="#8a3d13" stroke-width="1.1"/>
    <!-- black arrow -->
    <path d="M1244 352.5H1263V375.5H1271L1253.5 391L1236.5 375.5H1244Z" fill="#000" stroke="#fff" stroke-width="1.2" stroke-linejoin="miter"/>
    <!-- cylinder in inset -->
    <path d="M1164 500Q1170 478 1253 476Q1337 478 1342 500V480Q1253 470 1164 482Z" fill="#7a7a7a" opacity=".7"/>
    <path d="M1170 496Q1180 480 1253 480Q1326 480 1336.5 496V516L1341.5 520V612H1165V520L1170 516Z" fill="url(#cyl)"/>
    <path d="M1170 515Q1253 503 1336.5 515" fill="none" stroke="#c97031" stroke-width="1.1" opacity=".7"/>
    <path d="M1170 517Q1253 505 1336.5 517" fill="none" stroke="#6e2f0d" stroke-width="1" opacity=".6"/>
    <path d="M1253.5 480V509" stroke="#8a3d13" stroke-width=".9" opacity=".7"/>
    <path d="M1250.5 538V520H1248L1253.5 513L1259 520H1256.5V538Z" fill="none" stroke="#8a3d13" stroke-width=".9" opacity=".8"/>
  </g>
  <circle cx="1247" cy="423" r="186.5" fill="none" stroke="#fff" stroke-width="3.2"/>
  <circle cx="1247" cy="423" r="186.5" fill="none" stroke="#111" stroke-width="1.4"/>
  <!-- ===== circle 2 inset ===== -->
  <g clip-path="url(#c2)">
    <rect x="1059" y="631" width="378" height="378" fill="#fff"/>
    <!-- left background -->
    <path d="M1059 631H1180V776H1059Z" fill="#9b9b9b"/>
    <path d="M1100 660L1150 640L1180 640V700L1130 720L1100 760Z" fill="#8e8e8e"/>
    <path d="M1120 690Q1140 684 1166 692V772H1124Z" fill="#a6a6a6"/>
    <path d="M1132 690Q1150 686 1166 692V772H1140Z" fill="#8f8f8f"/>
    <path d="M1160 726Q1172 720 1184 726V772H1162Z" fill="#dcdcdc"/>
    <path d="M1090 700L1108 660L1114 662L1098 706Z" fill="#d6d6d6"/>
    <path d="M1148 666H1180V672H1148Z" fill="#e0e0e0"/>
    <path d="M1059 744L1098 742V776H1059Z" fill="#b2b2b2"/>
    <!-- white bar -->
    <path d="M1059 775.5H1178V785H1059Z" fill="#fbfbfb" stroke="#777" stroke-width="1"/>
    <!-- lower-left light shapes -->
    <path d="M1059 785H1180V1009H1059Z" fill="#f4f4f4"/>
    <path d="M1059 786L1100 786Q1096 810 1110 822H1059Z" fill="#b8b8b8"/>
    <path d="M1100 786H1180V812Q1150 824 1120 814Q1104 806 1100 786Z" fill="#fff" stroke="#b5b5b5" stroke-width="1"/>
    <path d="M1136 788Q1152 796 1170 788" fill="none" stroke="#9a9a9a" stroke-width="1.2"/>
    <path d="M1059 826L1100 830L1100 862L1059 858Z" fill="#bdbdbd"/>
    <path d="M1066 846L1096 852V866L1066 860Z" fill="#9a9a9a"/>
    <path d="M1070 868Q1090 862 1108 872L1180 874V898L1120 900Q1090 900 1072 890Z" fill="#d4d4d4"/>
    <path d="M1080 878L1176 880" stroke="#9c9c9c" stroke-width="1.2"/>
    <path d="M1100 871L1180 874V880L1100 877Z" fill="#f8f8f8"/>
    <path d="M1086 902L1150 906Q1160 916 1180 914V926L1100 924Z" fill="#cfcfcf"/>
    <path d="M1094 908L1178 918" stroke="#fff" stroke-width="2"/>
    <!-- right background -->
    <path d="M1312 631H1437V900L1312 900Z" fill="#999"/>
    <path d="M1326 650L1360 640L1372 700L1340 720L1326 716Z" fill="#c9c9c9"/>
    <path d="M1330 662H1348V676H1330Z" fill="#f3f3f3"/>
    <path d="M1336 712L1362 708L1362 720L1338 724Z" fill="#f0f0f0"/>
    <path d="M1370 690L1437 660V760L1400 740Z" fill="#b9b9b9"/>
    <path d="M1380 700L1420 690L1414 736L1390 740Z" fill="#dadada"/>
    <path d="M1326 790L1372 700L1378 704L1334 800Z" fill="#b3b3b3"/>
    <path d="M1340 800L1400 744L1404 750L1346 806Z" fill="#adadad"/>
    <ellipse cx="1362" cy="806" rx="28" ry="8" fill="#cfcfcf" stroke="#7f7f7f" stroke-width="1" transform="rotate(-6 1362 806)"/>
    <path d="M1326 840L1437 770V790L1326 858Z" fill="#8a8a8a"/>
    <g fill="#f2f2f2"><rect x="1387" y="796" width="10" height="4" transform="rotate(-14 1392 798)"/><rect x="1380" y="806" width="10" height="4" transform="rotate(-14 1385 808)"/><rect x="1372" y="817" width="10" height="4" transform="rotate(-14 1377 819)"/><rect x="1364" y="835" width="10" height="4" transform="rotate(-14 1369 837)"/><rect x="1356" y="846" width="10" height="4" transform="rotate(-14 1361 848)"/></g>
    <!-- lower right -->
    <path d="M1320 888H1437V1009H1320Z" fill="#ececec"/>
    <path d="M1366 892Q1400 886 1420 892V950L1376 956Z" fill="#b4b4b4"/>
    <path d="M1330 892L1362 890L1366 930L1340 936Z" fill="#d5d5d5"/>
    <path d="M1334 900L1360 896M1338 912L1364 920M1344 896L1352 930" stroke="#8c8c8c" stroke-width="1" fill="none"/>
    <!-- hose -->
    <path d="M1326 856H1340V861H1350V856L1436 860V888L1350 888V884H1340V890H1326Z" fill="#7a3a08" stroke="#120700" stroke-width="1.3"/>
    <path d="M1352 858Q1346 872 1352 888M1358 858Q1352 872 1358 888M1364 858Q1358 872 1364 888M1372 858Q1366 872 1372 888M1378 858Q1372 872 1378 888M1384 858Q1378 872 1384 888M1392 858Q1386 872 1392 888M1398 858Q1392 872 1398 888" fill="none" stroke="#120700" stroke-width="2"/>
    <path d="M1404 860H1436V886H1404Z" fill="#8a4510" stroke="#120700" stroke-width="1.2"/>
    <path d="M1396 886Q1408 900 1406 930L1414 930Q1416 900 1404 884Z" fill="#7a3a08" stroke="#120700" stroke-width="1"/>
    <path d="M1333 946Q1336 936 1350 938L1352 934L1366 936L1368 944Q1376 950 1370 958L1350 972Q1338 966 1333 946Z" fill="#8a4510" stroke="#120700" stroke-width="1.2"/>
    <path d="M1336 950Q1352 956 1368 946" fill="none" stroke="#120700" stroke-width="1"/>
    <!-- cylinder in inset -->
    <path d="M1183 690H1319V800H1183Z" fill="url(#cyl)"/>
    <path d="M1171 631H1327.7V698Q1250 684 1171 698Z" fill="url(#cyl)"/>
    <path d="M1171 697Q1250 683 1327.7 697V702Q1250 690 1171 702Z" fill="#6b2d0c"/>
    <path d="M1179 812H1328V1009H1179Z" fill="url(#cyl)"/>
    <!-- clamp -->
    <path d="M1172 799A82 11 0 0 1 1333 797V822Q1250 838 1176 826L1172 822Z" fill="url(#cyl)"/>
    <path d="M1172 799A82 11 0 0 1 1333 797" fill="none" stroke="#c06a2c" stroke-width="1.2" opacity=".65"/>
    <path d="M1176 817Q1250 832 1333 815V824Q1250 840 1176 828Z" fill="#4a1f09" opacity=".6"/>
    <path d="M1178 808L1210 802L1212 807L1248 803V809L1214 813L1182 816Z" fill="#b96326" opacity=".7"/>
    <path d="M1279 804L1316 806L1318 811L1279 810Z" fill="#b96326" opacity=".6"/>
    <path d="M1172 812H1180V832L1176 838L1172 834Z" fill="#c4661f"/>
    <rect x="1317" y="808" width="11" height="11" fill="#c4661f" stroke="#7a3510" stroke-width=".8"/>
    <rect x="1248.5" y="798" width="30" height="22" fill="#8c3c11" stroke="#4c1f08" stroke-width="1.2"/>
    <path d="M1260 805l6 8M1266 805l-6 8" stroke="#1a0a02" stroke-width="1.1"/>
    <path d="M1258 796Q1258 788 1263 788Q1268 788 1268 796Z" fill="#b5601f" opacity=".85"/>
    <!-- rim shadow under wide section -->
    <path d="M1183 702Q1250 690 1319 702V712Q1250 700 1183 712Z" fill="#3e1a09" opacity=".45"/>
  </g>
  <circle cx="1248" cy="819.8" r="188" fill="none" stroke="#fff" stroke-width="3.2"/>
  <circle cx="1248" cy="819.8" r="188" fill="none" stroke="#111" stroke-width="1.4"/>
  <!-- ===== labels and leaders ===== -->
  <g fill="none" stroke="#000" stroke-width="2.2">
    <path d="M767 236.5L790 235L974 221.5"/>
    <path d="M767 325.5H787L904 356.5"/>
    <path d="M767 446H787L904 476.5"/>
    <path d="M767 510H787L904 535.5"/>
    <path d="M767 602H787L904 635.5"/>
    <path d="M1134 346H1152L1216 370.5" stroke-width="1.5"/>
    <path d="M1134 415H1150L1218 490" stroke-width="1.5"/>
    <path d="M1120 748.5H1138L1207 798" stroke-width="1.5"/>
    <path d="M1120 841H1138L1200 893" stroke-width="1.5"/>
    <path d="M768 875L800 875L935 891.5" stroke-width="1.5"/>
    <path d="M768 932.5L800 933L944.6 950" stroke-width="1.5"/>
  </g>
  <g fill="none" stroke="#fff" stroke-width="2.2" stroke-dasharray="3.4 3.4">
    <path d="M790 235.6L974 222.1" stroke-dasharray="11 11"/>
    <path d="M789 326.6L904 357.1"/>
    <path d="M789 447.1L904 477.1"/>
    <path d="M789 511.1L904 536.1"/>
    <path d="M789 603.1L904 636.1"/>
  </g>
  <g fill="none" stroke="#000" stroke-width=".9">
    <path d="M790 234.4L974 220.9"/><path d="M787 324.9L904 355.9"/><path d="M787 445.4L904 475.9"/><path d="M787 509.4L904 534.9"/><path d="M787 601.4L904 634.9"/>
  </g>
  <g fill="none" stroke="#fff" stroke-width="1.1">
    <path d="M1152 347.4L1216 371.9"/><path d="M1150 416.4L1217 491.2"/><path d="M1138 750L1206 799.5"/><path d="M1138 842.5L1199 894.5"/>
  </g>
  <g fill="#fff">
    <rect x="745" y="218" width="22" height="35"/><rect x="745" y="308.5" width="22" height="35"/><rect x="745" y="428.5" width="22" height="34"/>
    <rect x="745" y="493.5" width="22" height="35"/><rect x="745" y="585.5" width="22" height="36"/>
    <rect x="1111" y="329.5" width="23" height="33"/><rect x="1111" y="398" width="23" height="33"/>
    <rect x="1098" y="732" width="22" height="35"/><rect x="1098" y="824" width="22" height="36"/>
  </g>
  <g font-family="Liberation Sans, sans-serif" font-weight="bold" font-size="30" fill="#000" text-anchor="middle">
    <text transform="translate(757 247.3) scale(.78 1)">1</text><text transform="translate(757.8 338.2) scale(.78 1)">2</text><text transform="translate(757.8 457.8) scale(.78 1)">3</text>
    <text transform="translate(757 523.3) scale(.78 1)">4</text><text transform="translate(757.8 615.8) scale(.78 1)">5</text>
    <text transform="translate(757 885.8) scale(.78 1)">6</text><text transform="translate(757.5 943.8) scale(.78 1)">7</text>
    <text transform="translate(1122.5 357.3) scale(.78 1)">1</text><text transform="translate(1123 426.3) scale(.78 1)">2</text>
    <text transform="translate(1109.5 761.8) scale(.78 1)">4</text><text transform="translate(1110 854.3) scale(.78 1)">5</text>
  </g>
  <!-- figure id -->
  <rect x="1366.8" y="1032.6" width="86.6" height="18.6" fill="#fff" stroke="#2b2b2b" stroke-width="1.6"/>
  <text x="1410" y="1046.2" font-family="Liberation Sans, sans-serif" font-weight="bold" font-size="10.5" text-anchor="middle" fill="#222" textLength="62" lengthAdjust="spacingAndGlyphs">N40-107 13</text>
</g>
</svg>


<!-- watermark -->
<div class="abs" style="left:471px;top:817px;width:900px;font-family:'Liberation Serif',serif;font-size:64.4px;line-height:63.5px;color:rgba(232,140,105,0.12);white-space:nowrap;letter-spacing:0.2px;pointer-events:none">汽修帮手在线资料库,每周更新<br>会员仅168/年，微信qxbs1688</div>
<!-- page text -->
<div class="abs t g" style="left:383px;top:1076px"><span class="ar">→</span> 车身外部维修; 修理组：66; 消声件；装配概览 - 消声件</div>
<div class="abs t k" style="left:383px;top:1104px">。</div>
<div class="abs t k" style="left:349px;top:1146px;font-weight:bold">拧紧力矩</div>
<div class="abs b" style="left:350px;top:1191px">♦</div>
<div class="abs t r" style="left:383px;top:1193px"><span class="ar">→</span> Kapitel „装配概览 - 副车架“</div>
<div class="abs b" style="left:350px;top:1226px">♦</div>
<div class="abs t k" style="left:383px;top:1228px">摆动支撑螺栓</div>
<div class="abs t g" style="left:383px;top:1254px"><span class="ar">→</span> 修理组：10; 动力总成支座；装配概览 - 动力总成支座</div>
<div class="abs b" style="left:350px;top:1287px">♦</div>
<div class="abs t k" style="left:383px;top:1289px">摆动支撑螺栓</div>
<div class="abs t g" style="left:383px;top:1316px"><span class="ar">→</span> 修理组：93; 电驱动装置牵引电机；装配概览 - 电驱动装置牵引电</div>
<div class="abs t g" style="left:383px;top:1342px">机</div>
<div class="abs b" style="left:350px;top:1373px">♦</div>
<div class="abs t k" style="left:383px;top:1375px">消声件螺栓</div>
</body>
</html>
